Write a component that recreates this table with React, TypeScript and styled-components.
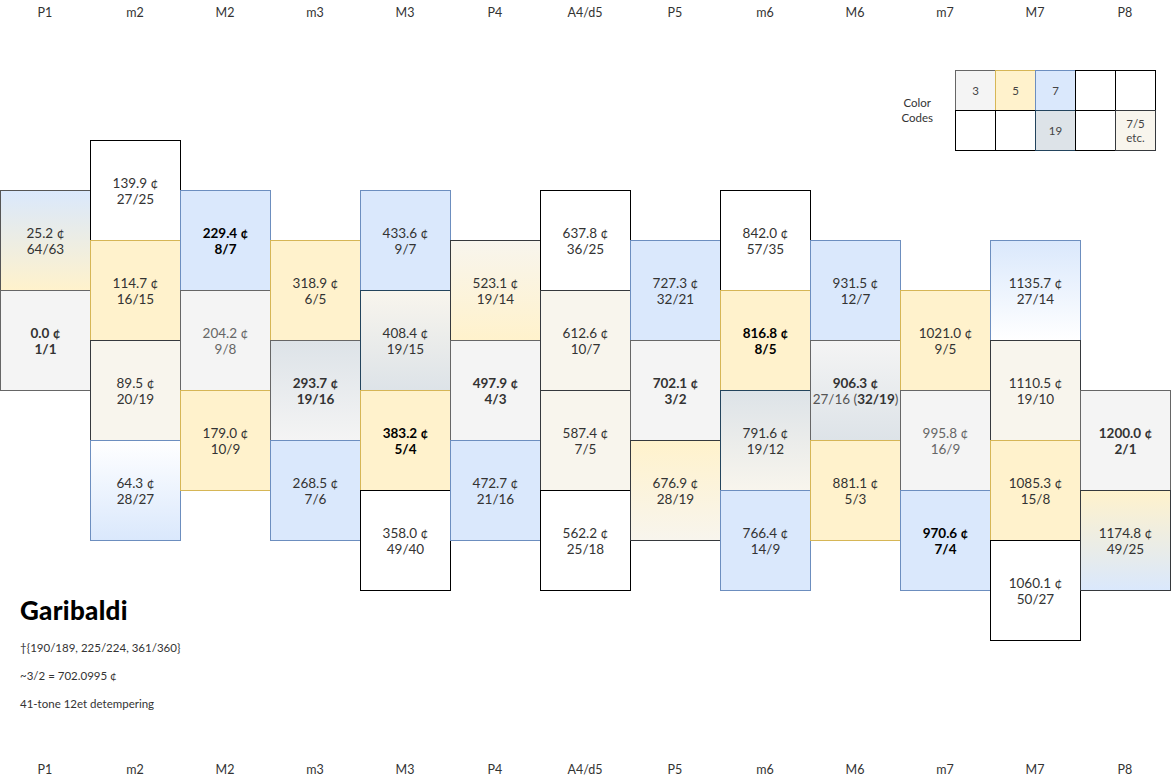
import React from 'react'
import styled, { createGlobalStyle } from 'styled-components'

type Tone = 'w' | 'g' | 'y' | 'b' | 'c' | 'n'

interface Cell {
  cents: string
  ratio: string
  alt?: string
  fill: Tone
  to?: Tone
  edge?: string
  bold?: boolean
  ink?: string
}

interface Column {
  label: string
  top: number
  cells: Cell[]
}

const fills: Record<Tone, string> = {
  w: '#ffffff',
  g: '#f4f4f4',
  y: '#fff2cc',
  b: '#dae8fc',
  c: '#f8f5ed',
  n: '#dde3e8',
}

const edges: Record<Tone, string> = {
  w: '#000000',
  g: '#666666',
  y: '#d6b656',
  b: '#6c8ebf',
  c: '#36393d',
  n: '#23445d',
}

const columns: Column[] = [
  {
    label: 'P1',
    top: 190,
    cells: [
      { cents: '25.2', ratio: '64/63', fill: 'b', to: 'y', edge: '#555' },
      { cents: '0.0', ratio: '1/1', fill: 'g', bold: true },
    ],
  },
  {
    label: 'm2',
    top: 140,
    cells: [
      { cents: '139.9', ratio: '27/25', fill: 'w' },
      { cents: '114.7', ratio: '16/15', fill: 'y' },
      { cents: '89.5', ratio: '20/19', fill: 'c' },
      { cents: '64.3', ratio: '28/27', fill: 'w', to: 'b', edge: edges.b },
    ],
  },
  {
    label: 'M2',
    top: 190,
    cells: [
      { cents: '229.4', ratio: '8/7', fill: 'b', bold: true, ink: '#000' },
      { cents: '204.2', ratio: '9/8', fill: 'g', ink: '#666' },
      { cents: '179.0', ratio: '10/9', fill: 'y' },
    ],
  },
  {
    label: 'm3',
    top: 240,
    cells: [
      { cents: '318.9', ratio: '6/5', fill: 'y' },
      { cents: '293.7', ratio: '19/16', fill: 'n', to: 'g', edge: edges.g, bold: true },
      { cents: '268.5', ratio: '7/6', fill: 'b' },
    ],
  },
  {
    label: 'M3',
    top: 190,
    cells: [
      { cents: '433.6', ratio: '9/7', fill: 'b' },
      { cents: '408.4', ratio: '19/15', fill: 'c', to: 'n', edge: edges.n },
      { cents: '383.2', ratio: '5/4', fill: 'y', bold: true, ink: '#000' },
      { cents: '358.0', ratio: '49/40', fill: 'w' },
    ],
  },
  {
    label: 'P4',
    top: 240,
    cells: [
      { cents: '523.1', ratio: '19/14', fill: 'c', to: 'y', edge: edges.c },
      { cents: '497.9', ratio: '4/3', fill: 'g', bold: true },
      { cents: '472.7', ratio: '21/16', fill: 'b' },
    ],
  },
  {
    label: 'A4/d5',
    top: 190,
    cells: [
      { cents: '637.8', ratio: '36/25', fill: 'w' },
      { cents: '612.6', ratio: '10/7', fill: 'c' },
      { cents: '587.4', ratio: '7/5', fill: 'c' },
      { cents: '562.2', ratio: '25/18', fill: 'w' },
    ],
  },
  {
    label: 'P5',
    top: 240,
    cells: [
      { cents: '727.3', ratio: '32/21', fill: 'b' },
      { cents: '702.1', ratio: '3/2', fill: 'g', bold: true },
      { cents: '676.9', ratio: '28/19', fill: 'y', to: 'c', edge: edges.c },
    ],
  },
  {
    label: 'm6',
    top: 190,
    cells: [
      { cents: '842.0', ratio: '57/35', fill: 'w' },
      { cents: '816.8', ratio: '8/5', fill: 'y', bold: true, ink: '#000' },
      { cents: '791.6', ratio: '19/12', fill: 'n', to: 'c', edge: edges.n },
      { cents: '766.4', ratio: '14/9', fill: 'b' },
    ],
  },
  {
    label: 'M6',
    top: 240,
    cells: [
      { cents: '931.5', ratio: '12/7', fill: 'b' },
      { cents: '906.3', ratio: '27/16', alt: '32/19', fill: 'g', to: 'n', edge: edges.g, bold: true },
      { cents: '881.1', ratio: '5/3', fill: 'y' },
    ],
  },
  {
    label: 'm7',
    top: 290,
    cells: [
      { cents: '1021.0', ratio: '9/5', fill: 'y' },
      { cents: '995.8', ratio: '16/9', fill: 'g', ink: '#666' },
      { cents: '970.6', ratio: '7/4', fill: 'b', bold: true, ink: '#000' },
    ],
  },
  {
    label: 'M7',
    top: 240,
    cells: [
      { cents: '1135.7', ratio: '27/14', fill: 'b', to: 'w', edge: edges.b },
      { cents: '1110.5', ratio: '19/10', fill: 'c' },
      { cents: '1085.3', ratio: '15/8', fill: 'y' },
      { cents: '1060.1', ratio: '50/27', fill: 'w' },
    ],
  },
  {
    label: 'P8',
    top: 390,
    cells: [
      { cents: '1200.0', ratio: '2/1', fill: 'g', bold: true },
      { cents: '1174.8', ratio: '49/25', fill: 'y', to: 'b', edge: edges.c },
    ],
  },
]

const legend: { text?: string; tone: Tone }[] = [
  { text: '3', tone: 'g' },
  { text: '5', tone: 'y' },
  { text: '7', tone: 'b' },
  { tone: 'w' },
  { tone: 'w' },
  { tone: 'w' },
  { tone: 'w' },
  { text: '19', tone: 'n' },
  { tone: 'w' },
  { text: '7/5 etc.', tone: 'c' },
]

// grid rows are 50px, first row line sits at y = 40
const rowOf = (y: number) => (y - 40) / 50 + 1

export default function App() {
  return (
    <Page>
      <GlobalStyle />
      <Labels>
        {columns.map((c) => (
          <Label key={c.label}>{c.label}</Label>
        ))}
      </Labels>

      <Canvas>
        {columns.map((col, ci) =>
          col.cells.map((cell, i) => (
            <Tile
              key={cell.cents}
              $col={ci + 1}
              $row={rowOf(col.top) + i * 2}
              $from={fills[cell.fill]}
              $to={fills[cell.to ?? cell.fill]}
              $edge={cell.edge ?? edges[cell.fill]}
              $bold={cell.bold}
              $ink={cell.ink}
            >
              <span>{cell.cents} ¢</span>
              {cell.alt ? (
                <Light>
                  {cell.ratio} (<b>{cell.alt}</b>)
                </Light>
              ) : (
                <span>{cell.ratio}</span>
              )}
            </Tile>
          )),
        )}

        <Legend>
          <LegendLabel>
            Color
            <br />
            Codes
          </LegendLabel>
          <Swatches>
            {legend.map((s, i) => (
              <Swatch key={i} $fill={fills[s.tone]} $edge={edges[s.tone]}>
                {s.text}
              </Swatch>
            ))}
          </Swatches>
        </Legend>

        <Notes>
          <Title>Garibaldi</Title>
          <Note>†{'{'}190/189, 225/224, 361/360{'}'}</Note>
          <Note>~3/2 = 702.0995 ¢</Note>
          <Note>41-tone 12et detempering</Note>
        </Notes>
      </Canvas>

      <Labels $bottom>
        {columns.map((c) => (
          <Label key={c.label}>{c.label}</Label>
        ))}
      </Labels>
    </Page>
  )
}

const GlobalStyle = createGlobalStyle`
  html, body {
    margin: 0;
    background: #ffffff;
    overflow: hidden;
  }
  body {
    font-family: Lato, "Open Sans", sans-serif;
    color: #333333;
  }
`

const Page = styled.div`
  width: 1171px;
  height: 780px;
  display: flex;
  flex-direction: column;
`

const Labels = styled.div<{ $bottom?: boolean }>`
  display: grid;
  grid-template-columns: repeat(13, 90px);
  height: ${(p) => (p.$bottom ? '22px' : '24px')};
  margin-top: ${(p) => (p.$bottom ? 'auto' : '0')};
`

const Label = styled.div`
  display: flex;
  align-items: center;
  justify-content: center;
  font-size: 12.5px;
  color: #333333;
`

const Canvas = styled.div`
  display: grid;
  grid-template-columns: repeat(13, 90px);
  grid-template-rows: repeat(14, 50px);
  margin-top: 16px;
`

const Tile = styled.div<{
  $col: number
  $row: number
  $from: string
  $to: string
  $edge: string
  $bold?: boolean
  $ink?: string
}>`
  grid-column: ${(p) => p.$col};
  grid-row: ${(p) => p.$row} / span 2;
  box-sizing: border-box;
  width: 91px;
  height: 101px;
  border: 1px solid ${(p) => p.$edge};
  background: linear-gradient(${(p) => p.$from}, ${(p) => p.$to});
  display: flex;
  flex-direction: column;
  align-items: center;
  justify-content: center;
  font-size: 13.5px;
  line-height: 16px;
  font-weight: ${(p) => (p.$bold ? 700 : 400)};
  color: ${(p) => p.$ink ?? '#333333'};
  white-space: nowrap;
`

const Light = styled.span`
  font-weight: 400;
  color: #555555;

  b {
    font-weight: 700;
    color: #333333;
  }
`

const Legend = styled.div`
  grid-column: 10 / 14;
  grid-row: 1 / 4;
  justify-self: end;
  align-self: start;
  margin: 30px 15px 0 0;
  display: flex;
  align-items: center;
  gap: 22px;
`

const LegendLabel = styled.div`
  font-size: 11.5px;
  line-height: 15px;
  text-align: center;
  color: #333333;
`

const Swatches = styled.div`
  display: grid;
  grid-template-columns: repeat(5, 40px);
  grid-template-rows: repeat(2, 40px);
`

const Swatch = styled.div<{ $fill: string; $edge: string }>`
  box-sizing: border-box;
  width: 41px;
  height: 41px;
  margin: 0 -1px -1px 0;
  border: 1px solid ${(p) => p.$edge};
  background: ${(p) => p.$fill};
  display: flex;
  align-items: center;
  justify-content: center;
  text-align: center;
  padding: 0 6px;
  font-size: 11.5px;
  line-height: 14px;
  color: #444444;
`

const Notes = styled.div`
  grid-column: 1 / 5;
  grid-row: 12 / span 3;
  padding: 5px 0 0 20px;
  display: flex;
  flex-direction: column;
  gap: 14px;
`

const Title = styled.div`
  font-size: 26px;
  line-height: 30px;
  font-weight: 900;
  color: #000000;
  letter-spacing: 0.3px;
  margin-bottom: 2px;
`

const Note = styled.div`
  font-size: 11.5px;
  line-height: 14px;
  color: #333333;
`
